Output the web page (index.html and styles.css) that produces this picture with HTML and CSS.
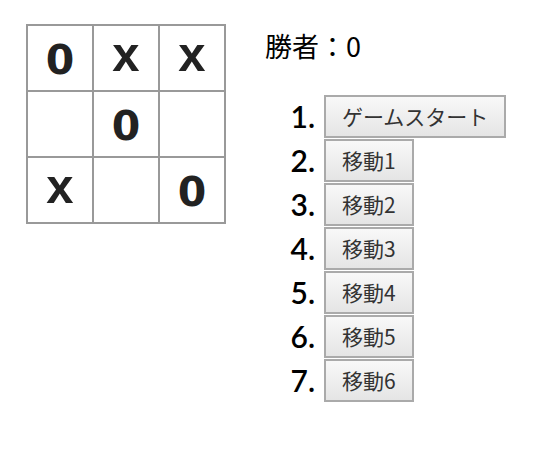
FILE: index.html
```html
<!DOCTYPE html>
<html lang="ja">

<head>
  <meta charset="UTF-8" />
  <title>三目並べ</title>
  <link rel="stylesheet" href="styles.css">
</head>

<body>
  <div class="game">
    <!-- Board -->
    <div class="board">
      <button class="square o">0</button>
      <button class="square x">x</button>
      <button class="square x">x</button>
      <button class="square"></button>
      <button class="square o">0</button>
      <button class="square"></button>
      <button class="square x">x</button>
      <button class="square"></button>
      <button class="square o">0</button>
    </div>

    <!-- Info -->
    <div class="game-info">
      <div class="status">勝者：0</div>
      <ol class="moves">
        <li><span class="num">1.</span><button class="move-btn">ゲームスタート</button></li>
        <li><span class="num">2.</span><button class="move-btn">移動1</button></li>
        <li><span class="num">3.</span><button class="move-btn">移動2</button></li>
        <li><span class="num">4.</span><button class="move-btn">移動3</button></li>
        <li><span class="num">5.</span><button class="move-btn">移動4</button></li>
        <li><span class="num">6.</span><button class="move-btn">移動5</button></li>
        <li><span class="num">7.</span><button class="move-btn">移動6</button></li>
      </ol>
    </div>
  </div>
</body>

</html>
```

FILE: styles.css
```css
* {
  box-sizing: border-box;
}

html,
body {
  margin: 0;
  padding: 0;
  background: #fff;
  color: #000;
  font-family: "Liberation Sans", "Noto Sans CJK JP", sans-serif;
}

body {
  padding: 24px 0 0 26px;
}

.game {
  display: flex;
  align-items: flex-start;
}

.board {
  display: grid;
  grid-template-columns: repeat(3, 64px);
  grid-template-rows: repeat(3, 64px);
  gap: 2px;
  padding: 2px;
  background: #999;
  width: 200px;
}

.square {
  display: flex;
  align-items: flex-end;
  justify-content: center;
  padding: 0 0 11px 0;
  background: #fff;
  border: none;
  font-weight: bold;
  color: #222;
  line-height: 1;
}

.square.o {
  font-family: "DejaVu Sans", sans-serif;
  font-size: 41px;
  padding-bottom: 9px;
}

.square.x {
  font-family: "Liberation Sans", sans-serif;
  font-size: 49px;
}

.game-info {
  margin-left: 39px;
  padding-top: 6px;
}

.status {
  font-size: 27px;
  line-height: 32px;
  font-family: "Noto Sans CJK JP", sans-serif;
}

.moves {
  list-style: none;
  margin: 32px 0 0 0;
  padding: 0;
}

.moves li {
  display: flex;
  align-items: center;
  height: 44px;
}

.num {
  width: 59px;
  text-align: right;
  padding-right: 9px;
  font-size: 30px;
  font-weight: 600;
  font-family: "Lato", sans-serif;
}

.move-btn {
  height: 43px;
  padding: 0 16px;
  font-size: 21px;
  font-family: "Noto Sans CJK JP", sans-serif;
  color: #333;
  background: linear-gradient(#f8f8f8, #e5e5e5);
  border: 2px solid #aaa;
}
```
